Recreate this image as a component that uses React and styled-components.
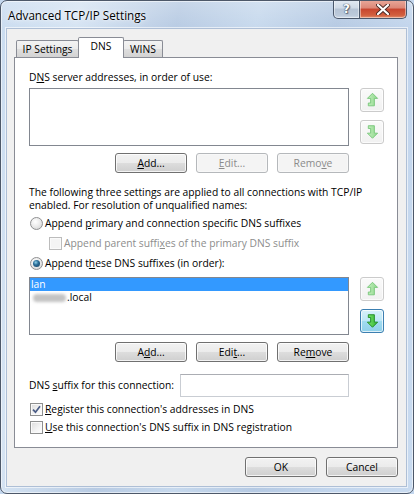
import React from 'react';
import styled, { createGlobalStyle } from 'styled-components';

const FONT = `"Open Sans", "Noto Sans", sans-serif`;

const Global = createGlobalStyle`
  html, body { margin: 0; padding: 0; width: 414px; height: 494px; overflow: hidden; background: #c4d7ee; }
  #root { width: 414px; height: 494px; }
  * { box-sizing: border-box; }
`;

const Frame = styled.div`
  width: 414px;
  height: 494px;
  display: flex;
  flex-direction: column;
  border: 1px solid #4d5869;
  border-radius: 7px;
  overflow: hidden;
  background:
    linear-gradient(180deg, rgba(255,255,255,0.22), rgba(255,255,255,0) 28px),
    linear-gradient(100deg, #cadcf0 0%, #d6e4f3 16%, #b8cbe3 36%, #c7d9ed 52%, #b6cae3 68%, #c3d6ed 84%, #c9dbf0 100%);
  box-shadow: inset 0 0 0 1px rgba(255,255,255,0.55);
  font-family: ${FONT};
  font-size: 10.3px;
  color: #000;
`;

const TitleBar = styled.div`
  height: 28px;
  flex: none;
  display: flex;
  align-items: flex-start;
  justify-content: space-between;
  padding: 0 6px 0 7px;
`;

const Title = styled.div`
  margin-top: 6px;
  font-size: 11.7px;
  line-height: 17px;
  color: #000;
  text-shadow: 0 0 6px rgba(255,255,255,0.95), 0 0 2px rgba(255,255,255,0.9);
`;

const Captions = styled.div`
  display: flex;
  margin-top: -1px;
`;

const CaptionButton = styled.div`
  height: 19px;
  width: ${p => p.$w}px;
  display: flex;
  align-items: center;
  justify-content: center;
  border: 1px solid #4a576b;
  border-top: none;
  ${p => p.$close ? 'border-left: none;' : ''}
  border-radius: ${p => p.$close ? '0 0 5px 0' : '0 0 0 5px'};
  background: ${p => p.$close
    ? 'linear-gradient(180deg, #e9a99b 0%, #dc8776 45%, #c7452f 50%, #d2603f 85%, #e29070 100%)'
    : 'linear-gradient(180deg, #e3eaf3 0%, #cfdae7 45%, #b5c3d5 50%, #bccadb 85%, #d1dcea 100%)'};
  box-shadow: inset 0 0 0 1px rgba(255,255,255,0.45);
  color: #fff;
  font-family: "DejaVu Sans", sans-serif;
  font-weight: bold;
  font-size: 12px;
  text-shadow: 0 0 1px #3a4658, 0 0 1px #3a4658, 1px 1px 1px rgba(40,50,70,0.6);
`;

const Client = styled.div`
  flex: 1;
  margin: 0 7px 7px 6px;
  background: #f0f0f0;
  display: flex;
  flex-direction: column;
  padding: 8px 8px 9px 7px;
  box-shadow: 0 0 0 1px #aebfd6, 0 0 0 2px rgba(255,255,255,0.6);
`;

const TabStrip = styled.div`
  height: 20px;
  flex: none;
  display: flex;
  align-items: flex-end;
  padding-left: 2px;
`;

const Tab = styled.div`
  width: ${p => p.$w}px;
  height: ${p => (p.$active ? 21 : 17)}px;
  margin-bottom: ${p => (p.$active ? -1 : 0)}px;
  margin-left: ${p => (p.$first ? 0 : -1)}px;
  position: relative;
  z-index: ${p => (p.$active ? 2 : 1)};
  display: flex;
  align-items: center;
  justify-content: center;
  padding-bottom: ${p => (p.$active ? 4 : 0)}px;
  border: 1px solid #898c95;
  border-bottom: none;
  border-radius: 2px 2px 0 0;
  background: ${p => (p.$active ? '#ffffff' : 'linear-gradient(180deg, #f3f3f3 0%, #ebebeb 50%, #dedede 51%, #d3d3d3 100%)')};
`;

const Panel = styled.div`
  flex: 1;
  background: #fff;
  border: 1px solid #898c95;
  padding: 13px 13px 0 14px;
  display: flex;
  flex-direction: column;
`;

const Label = styled.div`
  line-height: 13px;
  height: 13px;
  white-space: nowrap;
  margin-top: ${p => p.$mt || 0}px;
  color: ${p => (p.$disabled ? '#8d8d8d' : '#000')};
`;

const Para = styled.div`
  line-height: 13px;
  margin-top: 13px;
`;

const Acc = styled.span`
  text-decoration: underline;
  text-underline-offset: 1px;
`;

const ListRow = styled.div`
  display: flex;
  gap: 11px;
  margin-top: 4px;
`;

const ListBox = styled.div`
  width: 320px;
  height: 58px;
  border: 1px solid #828790;
  background: #fff;
  padding: 0;
  display: flex;
  flex-direction: column;
`;

const ListItem = styled.div`
  height: 13px;
  line-height: 13px;
  padding-left: 1px;
  display: flex;
  align-items: center;
  background: ${p => (p.$selected ? '#3399ff' : 'transparent')};
  color: ${p => (p.$selected ? '#fff' : '#000')};
`;

const Blur = styled.span`
  display: inline-block;
  width: 33px;
  height: 8px;
  border-radius: 4px;
  background: #c3c3c3;
  filter: blur(1.6px);
  margin: 0 1px 0 2px;
`;

const ArrowCol = styled.div`
  display: flex;
  flex-direction: column;
  gap: 8px;
`;

const ArrowButton = styled.div`
  width: 24px;
  height: 24px;
  border-radius: 3px;
  display: flex;
  align-items: center;
  justify-content: center;
  border: 1px solid ${p => (p.$hot ? '#3c7fb1' : '#cbcbcb')};
  background: ${p => (p.$hot
    ? 'linear-gradient(180deg, #d8f1fb 0%, #bde7f6 50%, #a2dbf0 51%, #8fd0ea 100%)'
    : 'linear-gradient(180deg, #fafafa 0%, #f1f1f1 100%)')};
  box-shadow: inset 0 0 0 1px rgba(255,255,255,0.7);
`;

const ButtonRow = styled.div`
  width: 320px;
  display: flex;
  justify-content: flex-end;
  gap: 9px;
  margin-top: 7px;
`;

const PushButton = styled.div`
  width: 72px;
  height: 20px;
  display: flex;
  align-items: center;
  justify-content: center;
  border-radius: 3px;
  border: 1px solid ${p => (p.$disabled ? '#b5b8bb' : '#707070')};
  color: ${p => (p.$disabled ? '#8b8b8b' : '#000')};
  background: ${p => (p.$disabled
    ? '#f4f4f4'
    : 'linear-gradient(180deg, #f2f2f2 0%, #ebebeb 50%, #dddddd 51%, #cfcfcf 100%)')};
  box-shadow: inset 0 0 0 1px ${p => (p.$disabled ? 'rgba(255,255,255,0.4)' : 'rgba(255,255,255,0.75)')};
`;

const OptionRow = styled.div`
  display: flex;
  align-items: center;
  gap: 2px;
  height: ${p => p.$h}px;
  padding-left: ${p => p.$indent}px;
  margin-top: ${p => p.$mt || 0}px;
  white-space: nowrap;
  color: ${p => (p.$disabled ? '#8d8d8d' : '#000')};
`;

const Radio = styled.span`
  width: 13px;
  height: 13px;
  flex: none;
  border-radius: 50%;
  border: 1px solid #8f9091;
  background: radial-gradient(circle at 40% 35%, #ffffff 0%, #ececec 45%, #cfcfcf 100%);
  display: flex;
  align-items: center;
  justify-content: center;
  &::after {
    content: '';
    display: ${p => (p.$checked ? 'block' : 'none')};
    width: 7px;
    height: 7px;
    border-radius: 50%;
    background: radial-gradient(circle at 40% 35%, #8fd1e8 0%, #2b6d98 40%, #17405f 100%);
  }
`;

const Box = styled.span`
  width: 13px;
  height: 13px;
  flex: none;
  border: 1px solid ${p => (p.$disabled ? '#bcbcbc' : '#8e8f8f')};
  background: ${p => (p.$disabled ? '#f4f4f4' : 'linear-gradient(135deg, #dcdcdc 0%, #f4f4f4 60%, #ffffff 100%)')};
  box-shadow: inset 0 0 0 1px #fafafa;
  display: flex;
  align-items: center;
  justify-content: center;
`;

const SuffixRow = styled.div`
  display: flex;
  align-items: center;
  justify-content: space-between;
  width: 320px;
  margin-top: 12px;
`;

const TextInput = styled.div`
  width: 169px;
  height: 23px;
  background: #fff;
  border: 1px solid #c9cdd3;
  border-top-color: #abadb3;
`;

const Footer = styled.div`
  display: flex;
  justify-content: flex-end;
  gap: 9px;
  margin-top: 9px;
  flex: none;
`;

const Arrow = ({ dir, on }) => {
  const fill = on ? 'url(#gOn)' : 'url(#gOff)';
  const stroke = on ? '#1f8a23' : '#79c77b';
  const pts = dir === 'up'
    ? '7,1 12.5,6.5 9,6.5 9,14.5 2.5,14.5 2.5,11.5 5,11.5 5,6.5 1.5,6.5'
    : '2.5,1.5 9,1.5 9,9.5 12.5,9.5 7,15 1.5,9.5 5,9.5 5,4.5 2.5,4.5';
  return (
    <svg width="13" height="16" viewBox="0 0 14 16.5">
      <defs>
        <linearGradient id="gOn" x1="0" y1="0" x2="1" y2="0">
          <stop offset="0" stopColor="#7be36b" />
          <stop offset="1" stopColor="#2fb534" />
        </linearGradient>
        <linearGradient id="gOff" x1="0" y1="0" x2="1" y2="0">
          <stop offset="0" stopColor="#c3efbb" />
          <stop offset="1" stopColor="#8fd88e" />
        </linearGradient>
      </defs>
      <polygon points={pts} fill={fill} stroke={stroke} strokeWidth="1" strokeLinejoin="round" />
    </svg>
  );
};

const Check = () => (
  <svg width="9" height="9" viewBox="0 0 9 9">
    <path d="M1 4.6 L3.5 7.2 L8 1.2" fill="none" stroke="#4b5d86" strokeWidth="1.7" />
  </svg>
);

const CloseGlyph = () => (
  <svg width="14" height="11" viewBox="0 0 14 11">
    <path d="M2 1 L12 10 M12 1 L2 10" stroke="#4a2a26" strokeWidth="4" strokeLinecap="round" />
    <path d="M2 1 L12 10 M12 1 L2 10" stroke="#ffffff" strokeWidth="2.2" strokeLinecap="round" />
  </svg>
);

export default function App() {
  return (
    <>
      <Global />
      <Frame>
        <TitleBar>
          <Title>Advanced TCP/IP Settings</Title>
          <Captions>
            <CaptionButton $w={27}>?</CaptionButton>
            <CaptionButton $w={47} $close><CloseGlyph /></CaptionButton>
          </Captions>
        </TitleBar>
        <Client>
          <TabStrip>
            <Tab $w={63} $first>IP Settings</Tab>
            <Tab $w={46} $active>DNS</Tab>
            <Tab $w={40}>WINS</Tab>
          </TabStrip>
          <Panel>
            <Label>D<Acc>N</Acc>S server addresses, in order of use:</Label>
            <ListRow>
              <ListBox />
              <ArrowCol>
                <ArrowButton><Arrow dir="up" /></ArrowButton>
                <ArrowButton><Arrow dir="down" /></ArrowButton>
              </ArrowCol>
            </ListRow>
            <ButtonRow>
              <PushButton><Acc>A</Acc>dd...</PushButton>
              <PushButton $disabled><Acc>E</Acc>dit...</PushButton>
              <PushButton $disabled>Remo<Acc>v</Acc>e</PushButton>
            </ButtonRow>
            <Para>
              The following three settings are applied to all connections with TCP/IP
              <br />
              enabled. For resolution of unqualified names:
            </Para>
            <OptionRow $h={20} $indent={1} $mt={1}>
              <Radio />
              <span>Append <Acc>p</Acc>rimary and connection specific DNS suffixes</span>
            </OptionRow>
            <OptionRow $h={20} $indent={20} $disabled>
              <Box $disabled />
              <span>Append parent suffi<Acc>x</Acc>es of the primary DNS suffix</span>
            </OptionRow>
            <OptionRow $h={20} $indent={1}>
              <Radio $checked />
              <span>Append t<Acc>h</Acc>ese DNS suffixes (in order):</span>
            </OptionRow>
            <ListRow>
              <ListBox>
                <ListItem $selected>lan</ListItem>
                <ListItem><Blur />.local</ListItem>
              </ListBox>
              <ArrowCol>
                <ArrowButton><Arrow dir="up" /></ArrowButton>
                <ArrowButton $hot><Arrow dir="down" on /></ArrowButton>
              </ArrowCol>
            </ListRow>
            <ButtonRow>
              <PushButton>A<Acc>d</Acc>d...</PushButton>
              <PushButton>Edi<Acc>t</Acc>...</PushButton>
              <PushButton>Re<Acc>m</Acc>ove</PushButton>
            </ButtonRow>
            <SuffixRow>
              <Label>DNS <Acc>s</Acc>uffix for this connection:</Label>
              <TextInput />
            </SuffixRow>
            <OptionRow $h={18} $indent={1} $mt={3}>
              <Box><Check /></Box>
              <span><Acc>R</Acc>egister this connection's addresses in DNS</span>
            </OptionRow>
            <OptionRow $h={18} $indent={1}>
              <Box />
              <span><Acc>U</Acc>se this connection's DNS suffix in DNS registration</span>
            </OptionRow>
          </Panel>
          <Footer>
            <PushButton>OK</PushButton>
            <PushButton>Cancel</PushButton>
          </Footer>
        </Client>
      </Frame>
    </>
  );
}
